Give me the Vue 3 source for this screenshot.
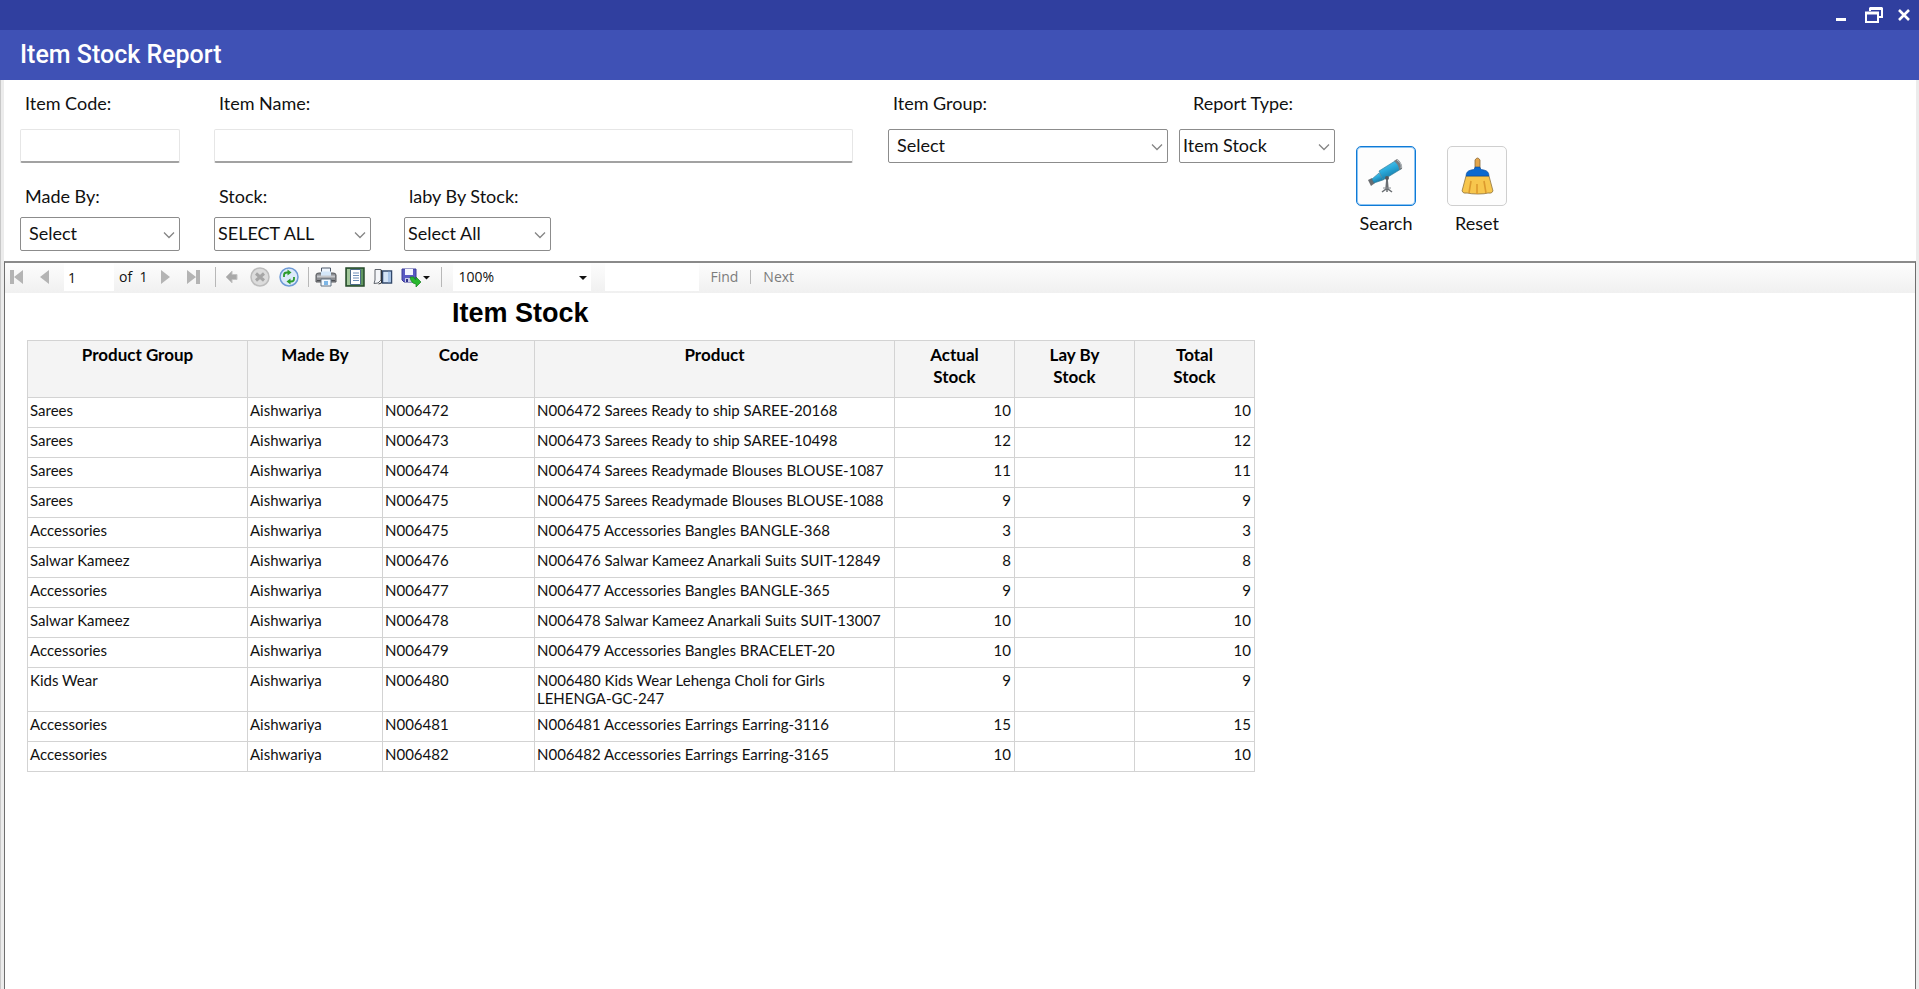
<script setup>
import { ref } from 'vue'

const itemCode = ref('')
const itemName = ref('')
const page = ref('1')
const findText = ref('')

const columns = [
  { label: ['Product Group'], cls: 'c-group' },
  { label: ['Made By'], cls: 'c-made' },
  { label: ['Code'], cls: 'c-code' },
  { label: ['Product'], cls: 'c-product' },
  { label: ['Actual', 'Stock'], cls: 'c-num' },
  { label: ['Lay By', 'Stock'], cls: 'c-num' },
  { label: ['Total', 'Stock'], cls: 'c-num' },
]

const rows = [
  ['Sarees', 'N006472', 'Sarees Ready to ship SAREE-20168', 10],
  ['Sarees', 'N006473', 'Sarees Ready to ship SAREE-10498', 12],
  ['Sarees', 'N006474', 'Sarees Readymade Blouses BLOUSE-1087', 11],
  ['Sarees', 'N006475', 'Sarees Readymade Blouses BLOUSE-1088', 9],
  ['Accessories', 'N006475', 'Accessories Bangles BANGLE-368', 3],
  ['Salwar Kameez', 'N006476', 'Salwar Kameez Anarkali Suits SUIT-12849', 8],
  ['Accessories', 'N006477', 'Accessories Bangles BANGLE-365', 9],
  ['Salwar Kameez', 'N006478', 'Salwar Kameez Anarkali Suits SUIT-13007', 10],
  ['Accessories', 'N006479', 'Accessories Bangles BRACELET-20', 10],
  ['Kids Wear', 'N006480', 'Kids Wear Lehenga Choli for Girls LEHENGA-GC-247', 9],
  ['Accessories', 'N006481', 'Accessories Earrings Earring-3116', 15],
  ['Accessories', 'N006482', 'Accessories Earrings Earring-3165', 10],
]
</script>

<template>
  <div class="window">
    <div class="titlebar">
      <button type="button" class="win-btn" aria-label="Minimize">
        <svg width="12" height="18" viewBox="0 0 12 18"><path d="M1 13.500H11" stroke="#fff" stroke-width="3" /></svg>
      </button>
      <button type="button" class="win-btn" aria-label="Restore">
        <svg width="18" height="18" viewBox="0 0 18 18" fill="none" stroke="#fff" stroke-width="2">
          <path d="M5 5V2.500H17V11H14" /><path d="M5 2.500H17" stroke-width="3" />
          <path d="M1 7V16H13V7Z" /><path d="M0 7H14" stroke-width="3" />
        </svg>
      </button>
      <button type="button" class="win-btn" aria-label="Close">
        <svg width="12" height="18" viewBox="0 0 12 18"><path d="M1 4L11 14M11 4L1 14" stroke="#fff" stroke-width="2.600" /></svg>
      </button>
    </div>

    <header class="header"><h1>Item Stock Report</h1></header>

    <main class="body">
      <form class="filters" @submit.prevent>
        <div class="fields">
          <div class="line">
            <div class="field w-code">
              <label for="code">Item Code:</label>
              <input id="code" v-model="itemCode" type="text" class="box">
            </div>
            <div class="field w-name">
              <label for="name">Item Name:</label>
              <input id="name" v-model="itemName" type="text" class="box">
            </div>
            <div class="field w-itemgroup">
              <label for="group">Item Group:</label>
              <div class="pick">
                <select id="group" class="inset"><option>Select</option></select>
                <svg class="chev" width="12" height="8" viewBox="0 0 12 8"><path d="M1 1.500L6 6.500L11 1.500" /></svg>
              </div>
            </div>
            <div class="field w-type">
              <label for="type">Report Type:</label>
              <div class="pick">
                <select id="type"><option>Item Stock</option></select>
                <svg class="chev" width="12" height="8" viewBox="0 0 12 8"><path d="M1 1.500L6 6.500L11 1.500" /></svg>
              </div>
            </div>
          </div>
          <div class="line second">
            <div class="field w-code">
              <label for="made">Made By:</label>
              <div class="pick">
                <select id="made" class="inset"><option>Select</option></select>
                <svg class="chev" width="12" height="8" viewBox="0 0 12 8"><path d="M1 1.500L6 6.500L11 1.500" /></svg>
              </div>
            </div>
            <div class="field w-stock">
              <label for="stock">Stock:</label>
              <div class="pick">
                <select id="stock"><option>SELECT ALL</option></select>
                <svg class="chev" width="12" height="8" viewBox="0 0 12 8"><path d="M1 1.500L6 6.500L11 1.500" /></svg>
              </div>
            </div>
            <div class="field w-layby">
              <label for="layby">laby By Stock:</label>
              <div class="pick">
                <select id="layby"><option>Select All</option></select>
                <svg class="chev" width="12" height="8" viewBox="0 0 12 8"><path d="M1 1.500L6 6.500L11 1.500" /></svg>
              </div>
            </div>
          </div>
        </div>

        <div class="actions">
          <div class="action">
            <button id="search" type="submit" class="tile primary" aria-labelledby="search-label">
              <svg width="38" height="38" viewBox="0 0 38 38">
                <defs>
                  <linearGradient id="tube" x1="0" y1="0" x2="0.500" y2="1">
                    <stop offset="0" stop-color="#6fd2f0" /><stop offset="0.500" stop-color="#2babdc" /><stop offset="1" stop-color="#15749f" />
                  </linearGradient>
                </defs>
                <path d="M20 21L19 32L15 35M20 21L21 32L25 35M20 22V35" stroke="#6a6e72" stroke-width="1.500" fill="none" />
                <path d="M16 31H24" stroke="#8a8e92" stroke-width="1" />
                <path d="M1 23L5 21L8 26L4 29Z" fill="#6a6d71" />
                <path d="M5 22L12 16L16 23L7 26Z" fill="url(#tube)" stroke="#2f7896" stroke-width="0.600" />
                <path d="M12 14L28 4L34 12L16 23Z" fill="url(#tube)" stroke="#2f7896" stroke-width="0.600" />
                <path d="M27 4L30 2C33 4 36 8 35 12L32 13C32 9 30 6 27 4Z" fill="#777c80" />
                <path d="M30 3C33 5 35 8 34 11" stroke="#c4cbcf" stroke-width="1" fill="none" />
                <circle cx="20" cy="21" r="2" fill="#55595d" />
              </svg>
            </button>
            <label id="search-label" for="search">Search</label>
          </div>
          <div class="action">
            <button id="reset" type="reset" class="tile" aria-labelledby="reset-label">
              <svg width="38" height="38" viewBox="0 0 38 38">
                <path d="M17 12V3Q19.500 -1 22 3V12Z" fill="#e2a54b" stroke="#8c6a38" stroke-width="0.800" />
                <path d="M8 19L4 34Q5 37 9 36Q13 37 20 37Q27 37 30 36Q34 37 35 34L31 19Z" fill="#f7c64d" stroke="#8e7440" stroke-width="0.800" />
                <path d="M13 24L11 36M19 27V37M26 24L28 36" stroke="#dc9a2e" stroke-width="1.600" fill="none" />
                <path d="M17 10H22V11Q23 13 26 13Q31 14 31 19H8Q8 14 13 13Q16 13 17 11Z" fill="#0b69cf" stroke="#0a4c9c" stroke-width="0.600" />
              </svg>
            </button>
            <label id="reset-label" for="reset">Reset</label>
          </div>
        </div>
      </form>

      <section class="viewer">
        <div class="toolbar">
          <div class="tools nav">
            <button type="button" class="tool" aria-label="First page">
              <svg width="14" height="16" viewBox="0 0 14 16"><path d="M0 1H4V15H0ZM13 1V15L4 8Z" fill="#b4b4b4" /></svg>
            </button>
            <button type="button" class="tool" aria-label="Previous page">
              <svg width="9" height="16" viewBox="0 0 9 16"><path d="M9 1V15L0 8Z" fill="#b4b4b4" /></svg>
            </button>
          </div>
          <input v-model="page" type="text" class="page" aria-label="Current page">
          <span class="of">of&nbsp; 1</span>
          <div class="tools nav-end">
            <button type="button" class="tool" aria-label="Next page">
              <svg width="9" height="16" viewBox="0 0 9 16"><path d="M0 1V15L9 8Z" fill="#b4b4b4" /></svg>
            </button>
            <button type="button" class="tool" aria-label="Last page">
              <svg width="14" height="16" viewBox="0 0 14 16"><path d="M9 1H13V15H9ZM0 1V15L9 8Z" fill="#b4b4b4" /></svg>
            </button>
          </div>
          <i class="sep"></i>
          <div class="tools icons first">
            <button type="button" class="tool" aria-label="Back">
              <svg width="16" height="20" viewBox="0 0 16 20"><path d="M1 10L7 4V7.500H12V12.500H7V16Z" fill="#a9a9a9" stroke="#c4c4c4" /></svg>
            </button>
            <button type="button" class="tool" aria-label="Stop">
              <svg width="20" height="20" viewBox="0 0 20 20"><circle cx="10" cy="10" r="9" fill="#dcdcdc" stroke="#bdbdbd" stroke-width="1.500" /><path d="M6 6.500L14 13.500M14 6.500L6 13.500" stroke="#a6a6a6" stroke-width="3" /></svg>
            </button>
            <button type="button" class="tool" aria-label="Refresh">
              <svg width="20" height="20" viewBox="0 0 20 20">
                <circle cx="10" cy="10" r="9" fill="#dceafa" stroke="#6e9ad6" stroke-width="1.500" />
                <path d="M5 10V8Q5 5.500 8 5.500H9" fill="none" stroke="#2c9c2c" stroke-width="1.800" /><path d="M8.500 2.500L12.500 5.500L8.500 8.500Z" fill="#2c9c2c" />
                <path d="M15 10V12Q15 14.500 12 14.500H11" fill="none" stroke="#2c9c2c" stroke-width="1.800" /><path d="M11.500 11.500L7.500 14.500L11.500 17.500Z" fill="#2c9c2c" />
              </svg>
            </button>
          </div>
          <i class="sep"></i>
          <div class="tools icons second-set">
            <button type="button" class="tool" aria-label="Print">
              <svg width="22" height="20" viewBox="0 0 22 20">
                <path d="M6.500 1H15.500V9H6.500Z" fill="#eef5fd" stroke="#4e5a6b" />
                <path d="M1 8Q1 6 4 6H18Q21 6 21 8V15H1Z" fill="#8c8e92" stroke="#56585c" />
                <path d="M6 4.500H16V9H6Z" fill="#d4e7f9" />
                <path d="M2 9.500H20" stroke="#c6c8cc" stroke-width="2" />
                <path d="M2 13.500H20" stroke="#4c4e52" />
                <path d="M6 12H16V19H6Z" fill="#f5faff" stroke="#607080" /><path d="M9 14H13V18H9Z" fill="#7db6e6" />
              </svg>
            </button>
            <button type="button" class="tool" aria-label="Print layout">
              <svg width="20" height="20" viewBox="0 0 20 20">
                <path d="M1 1H19V19H1Z" fill="#5f9660" stroke="#264a2a" stroke-width="1.500" /><path d="M2 2H5V18H2Z" fill="#a2c79a" />
                <path d="M5.500 2.500H15.500V17.500H5.500Z" fill="#fff" stroke="#4b6a87" />
                <path d="M8 6H14M8 8.500H14M8 11H14M8 13.500H14" stroke="#6e8fb8" />
              </svg>
            </button>
            <button type="button" class="tool" aria-label="Page setup">
              <svg width="20" height="20" viewBox="0 0 20 20">
                <path d="M9.500 4H18.500V16H9.500Z" fill="#d3e3f6" stroke="#33496b" stroke-width="1.500" />
                <path d="M2 2.500H8V13L5 16L1 16.500L2 13Z" fill="#f4f6f9" stroke="#60656d" /><path d="M8.500 3V16L5.500 17" stroke="#30343a" fill="none" />
                <path d="M15 4.800H17.800V15.200H15Z" fill="#a7c4e8" />
              </svg>
            </button>
            <button type="button" class="tool" aria-label="Export">
              <svg width="29" height="20" viewBox="0 0 29 20">
                <path d="M1 2H15V15H3L1 13Z" fill="#5a5ac4" stroke="#3d3d98" /><path d="M4 2H12V8H4Z" fill="#f4f5ff" />
                <path d="M4 11H12V15H4Z" fill="#c7cbe6" /><path d="M5 12H7V15H5Z" fill="#33338c" />
                <path d="M9 10L13 10Q13 12.500 15 12.500V10L20 15L15 20V17Q10 16.500 9 10Z" fill="#28b82e" stroke="#16801d" stroke-width="0.700" />
                <path d="M22 9H29L25.500 12.500Z" fill="#111" />
              </svg>
            </button>
          </div>
          <i class="sep"></i>
          <div class="zoom">
            <select aria-label="Zoom"><option>100%</option></select>
            <svg class="caret" width="8" height="4" viewBox="0 0 8 4"><path d="M0 0H8L4 4Z" fill="#111" /></svg>
          </div>
          <input v-model="findText" type="text" class="find" aria-label="Find text">
          <button type="button" class="link">Find</button>
          <i class="sep short"></i>
          <button type="button" class="link">Next</button>
        </div>

        <div class="report">
          <h2>Item Stock</h2>
          <table>
            <colgroup><col v-for="(c, i) in columns" :key="i" :class="c.cls"></colgroup>
            <thead>
              <tr>
                <th v-for="(c, i) in columns" :key="i" scope="col"><span v-for="l in c.label" :key="l">{{ l }}</span></th>
              </tr>
            </thead>
            <tbody>
              <tr v-for="(r, i) in rows" :key="i">
                <td>{{ r[0] }}</td>
                <td>Aishwariya</td>
                <td>{{ r[1] }}</td>
                <td>{{ r[1] }} {{ r[2] }}</td>
                <td class="num">{{ r[3] }}</td>
                <td class="num"></td>
                <td class="num">{{ r[3] }}</td>
              </tr>
            </tbody>
          </table>
        </div>
      </section>
    </main>
  </div>
</template>

<style>
body {
  margin: 0;
  background: #fff;
}
</style>

<style scoped>
* {
  box-sizing: border-box;
}
.window {
  display: flex;
  flex-direction: column;
  min-height: 100vh;
  font-family: Lato, "Open Sans", sans-serif;
  font-size: 18px;
  color: #111;
}
button,
input,
select {
  margin: 0;
  padding: 0;
  border: 0;
  background: none;
  font: inherit;
  color: inherit;
  outline: 0;
}
svg {
  display: block;
}
.titlebar {
  display: flex;
  justify-content: flex-end;
  align-items: center;
  gap: 15px;
  height: 30px;
  padding-right: 9px;
  background: #303f9f;
}
.win-btn:first-child {
  margin-right: 3px;
}
.header {
  display: flex;
  align-items: center;
  height: 50px;
  padding-left: 20px;
  background: #3f51b5;
}
h1 {
  margin: 0;
  font: 500 25px/30px Roboto, sans-serif;
  color: #fff;
}
.body {
  flex: 1;
  display: flex;
  flex-direction: column;
  padding: 0 3px;
  border-left: 1px solid #c8c8c8;
  background: linear-gradient(90deg, #ececec 3px, #fff 3px, #fff calc(100% - 3px), #ececec calc(100% - 3px));
}
.filters {
  display: flex;
  gap: 21px;
  height: 181px;
  padding: 11px 409px 0 16px;
}
.fields {
  flex: 1;
  min-width: 0;
}
.line {
  display: flex;
}
.second {
  margin-top: 21px;
}
.field {
  flex: none;
}
.field label {
  display: block;
  height: 38px;
  padding-left: 5px;
  line-height: 24px;
}
.second .field label {
  height: 33px;
}
.w-code {
  width: 160px;
  margin-right: 34px;
}
.w-name {
  flex: 1;
  min-width: 120px;
  margin-right: 35px;
}
.w-itemgroup {
  width: 280px;
  margin-right: 11px;
}
.w-type {
  width: 156px;
}
.w-type label {
  padding-left: 14px;
}
.w-stock {
  width: 157px;
  margin-right: 33px;
}
.w-layby {
  width: 147px;
}
.box {
  display: block;
  width: 100%;
  height: 34px;
  padding: 0 4px;
  border: 1px solid #e6e6e6;
  border-bottom: 2px solid #a2a2a2;
  border-radius: 2px;
  background: #fff;
}
.pick {
  position: relative;
}
.pick select {
  display: block;
  width: 100%;
  height: 34px;
  padding: 0 24px 2px 3px;
  border: 1px solid #8c8c8c;
  border-radius: 2px;
  background: #fff;
  appearance: none;
}
.pick .inset {
  padding-left: 8px;
}
.chev {
  position: absolute;
  right: 5px;
  top: 14px;
  fill: none;
  stroke: #858585;
  stroke-width: 1.3;
  pointer-events: none;
}
.actions {
  display: flex;
  gap: 31px;
  padding-top: 55px;
}
.action {
  display: flex;
  flex-direction: column;
  align-items: center;
  width: 60px;
}
.action label {
  margin-top: 5px;
  line-height: 24px;
}
.tile {
  display: flex;
  justify-content: center;
  align-items: center;
  width: 60px;
  height: 60px;
  border: 1px solid #cfcfcf;
  border-radius: 5px;
  background: #fdfdfd;
}
.primary {
  border: 1px solid #0f7ad6;
  box-shadow: inset 0 0 0 1px #8cc4f2;
}
.viewer {
  flex: 1;
  display: flex;
  flex-direction: column;
  border: 1px solid #6e6e6e;
  border-top: 2px solid #8a8a8a;
  border-bottom: 0;
  background: #fff;
}
.toolbar {
  display: flex;
  align-items: center;
  height: 30px;
  padding: 0 0 2px 5px;
  background: linear-gradient(#fdfdfd, #f0f0f0);
  font: 14px/20px "Open Sans", sans-serif;
}
.tools {
  display: flex;
  align-items: center;
}
.nav {
  gap: 16px;
  margin-right: 15px;
}
.nav-end {
  gap: 17px;
  margin: 0 14px;
}
.icons {
  gap: 9px;
}
.first {
  margin: 0 9px;
}
.second-set {
  gap: 8px;
  margin: 0 11px 0 6px;
}
.page {
  width: 50px;
  height: 28px;
  padding-left: 4px;
  background: #fff;
}
.of {
  margin-left: 5px;
}
.sep {
  width: 1px;
  height: 20px;
  background: #b8b8b8;
}
.short {
  height: 14px;
  margin: 0 12px;
}
.zoom {
  position: relative;
  width: 138px;
  height: 28px;
  margin-left: 11px;
}
.zoom select {
  width: 100%;
  height: 28px;
  padding-left: 5px;
  background: #fff;
  appearance: none;
}
.caret {
  position: absolute;
  right: 4px;
  top: 13px;
  pointer-events: none;
}
.find {
  width: 94px;
  height: 28px;
  margin: 0 11px 0 14px;
  background: #fff;
}
.link {
  color: #7c7c7c;
}
.report {
  padding: 4px 22px 40px;
}
h2 {
  width: 1000px;
  margin: 0 0 11px;
  padding-left: 425px;
  font: bold 27px/32px "Liberation Sans", Arial, sans-serif;
  color: #000;
}
table {
  width: 1227px;
  table-layout: fixed;
  border-collapse: collapse;
  font-size: 15px;
  line-height: 18px;
}
.c-group {
  width: 220px;
}
.c-made {
  width: 135px;
}
.c-code {
  width: 152px;
}
.c-product {
  width: 360px;
}
.c-num {
  width: 120px;
}
th,
td {
  border: 1px solid #d3d3d3;
  vertical-align: top;
}
th {
  height: 57px;
  padding: 3px;
  background: #f4f4f4;
  font-size: 17px;
  line-height: 22px;
  color: #000;
}
th span {
  display: block;
}
td {
  height: 30px;
  padding: 3px 3px 4px 2px;
  text-align: left;
}
td.num {
  text-align: right;
}
</style>
